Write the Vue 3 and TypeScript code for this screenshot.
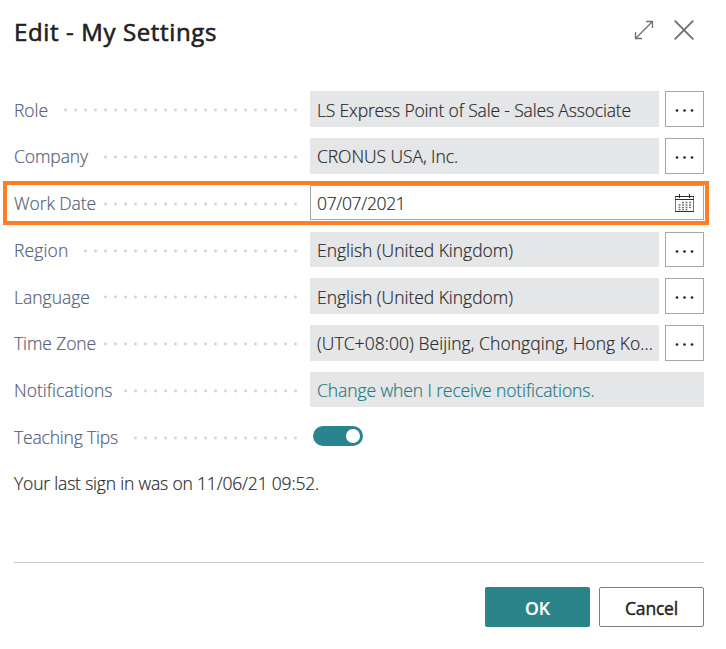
<script setup lang="ts">
import { ref } from 'vue'

interface Row {
  label: string
  labelWidth: number
  dots: number
  value: string
  valueWidth: number
  kind: 'lookup' | 'date' | 'link' | 'toggle'
}

const rows: Row[] = [
  { label: 'Role', labelWidth: 34, dots: 24, value: 'LS Express Point of Sale - Sales Associate', valueWidth: 314, kind: 'lookup' },
  { label: 'Company', labelWidth: 74, dots: 20, value: 'CRONUS USA, Inc.', valueWidth: 141, kind: 'lookup' },
  { label: 'Work Date', labelWidth: 82, dots: 20, value: '07/07/2021', valueWidth: 88.5, kind: 'date' },
  { label: 'Region', labelWidth: 54.5, dots: 22, value: 'English (United Kingdom)', valueWidth: 196, kind: 'lookup' },
  { label: 'Language', labelWidth: 76, dots: 20, value: 'English (United Kingdom)', valueWidth: 196, kind: 'lookup' },
  { label: 'Time Zone', labelWidth: 82, dots: 20, value: '(UTC+08:00) Beijing, Chongqing, Hong Ko...', valueWidth: 336, kind: 'lookup' },
  { label: 'Notifications', labelWidth: 98.5, dots: 18, value: 'Change when I receive notifications.', valueWidth: 277.5, kind: 'link' },
  { label: 'Teaching Tips', labelWidth: 104, dots: 17, value: '', valueWidth: 0, kind: 'toggle' },
]

const teachingTips = ref(true)

// Tracks a run of text so that it fills the given measure.
const vFit = {
  mounted(el: HTMLElement, binding: { value: number }) {
    const count = (el.textContent ?? '').length
    if (!count || !binding.value) return
    const natural = el.getBoundingClientRect().width
    el.style.letterSpacing = `${(binding.value - natural) / count}px`
  },
}
</script>

<template>
  <main class="dialog">
    <header class="head">
      <h1><span v-fit="203">Edit - My Settings</span></h1>
      <div class="tools">
        <svg class="expand" width="20" height="20" viewBox="0 0 20 20">
          <path d="M1.500 18.500 18.500 1.500M12 1.500h6.500v6.500M1.500 12v6.500h6.500" />
        </svg>
        <svg class="close" width="20" height="20" viewBox="0 0 20 20">
          <path d="M.7 .7 19.300 19.300M19.300 .7 .7 19.300" />
        </svg>
      </div>
    </header>

    <section class="fields">
      <div v-for="row in rows" :key="row.label" class="row" :class="row.kind">
        <div class="caption">
          <span v-fit="row.labelWidth" class="label">{{ row.label }}</span>
          <svg class="leader" :width="row.dots * 10" height="4">
            <circle v-for="n in row.dots" :key="n" :cx="n * 10 - 3.500" cy="2" r="1.400" />
          </svg>
        </div>
        <button v-if="row.kind === 'toggle'" class="switch" :class="{ on: teachingTips }" role="switch" @click="teachingTips = !teachingTips">
          <i class="knob"></i>
        </button>
        <template v-else>
          <div class="box"><span v-fit="row.valueWidth" class="value">{{ row.value }}</span>
            <svg v-if="row.kind === 'date'" class="calendar" width="20" height="19" viewBox="0 0 20 19">
              <path class="frame" d="M.5 2.500h18v15H.5z" />
              <path class="edge" d="M0 2.500h19M0 5.500h19M0 17.500h19" />
              <path class="edge" d="M4.500 0v4M14.500 0v4" />
              <path class="days" d="M7 8.500h9M3.500 11h12.500M3.500 13.300h12.500M3.500 15.500h9" />
            </svg>
          </div>
          <button v-if="row.kind === 'lookup'" class="more">
            <svg width="19" height="3"><circle cx="2" cy="1.500" r="1.350" /><circle cx="9.500" cy="1.500" r="1.350" /><circle cx="17" cy="1.500" r="1.350" /></svg>
          </button>
        </template>
      </div>
    </section>

    <p class="note"><span v-fit="305">Your last sign in was on 11/06/21 09:52.</span></p>

    <footer class="actions">
      <button class="ok"><span v-fit="25">OK</span></button>
      <button class="cancel"><span v-fit="53">Cancel</span></button>
    </footer>
  </main>
</template>

<style>
body {
  background: #fff;
}
</style>

<style scoped>
.dialog {
  box-sizing: border-box;
  width: 726px;
  height: 649px;
  padding: 0 22px 0 14px;
  overflow: hidden;
  background: #fff;
  color: #2b2b2b;
  font: 300 17.5px/24px "Open Sans", "Noto Sans", sans-serif;
  -webkit-text-stroke-width: 0.2px;
}
span {
  white-space: pre;
}
button {
  box-sizing: border-box;
  padding: 0;
  border: 0;
  background: none;
  color: inherit;
  font: inherit;
}
.head {
  display: flex;
  justify-content: space-between;
  height: 91px;
}
h1 {
  margin: 16px 0 0;
  color: #212121;
  font-size: 24px;
  font-weight: 400;
  line-height: 32px;
  -webkit-text-stroke-width: 0.6px;
}
.tools {
  display: flex;
  gap: 20px;
  padding: 20px 10px 0 0;
}
.tools path {
  fill: none;
  stroke: #707070;
}
.expand path {
  stroke-width: 1.3;
}
.close path {
  stroke-width: 1.9;
}
.fields {
  display: grid;
  grid-template-rows: 47px 47px 47px 46px 47px 47px 47px 46px;
}
.row {
  display: grid;
  grid-template-columns: 296px 1fr auto;
  align-items: start;
}
.caption {
  display: flex;
  align-items: center;
  justify-content: space-between;
  height: 38px;
  padding-right: 11px;
  color: #56617a;
}
.leader {
  fill: #cfd1d4;
}
.box {
  display: flex;
  box-sizing: border-box;
  align-items: center;
  height: 36px;
  padding: 2px 0 0 7px;
  background: #e5e6e8;
}
.more {
  display: grid;
  place-items: center;
  width: 39px;
  height: 36px;
  margin-left: 6px;
  padding-top: 3px;
  border: 1px solid #a6a6a6;
  fill: #252525;
}
.row:nth-child(4) .box,
.row:nth-child(4) .more {
  height: 35px;
}
.row:not(:nth-child(1)):not(:nth-child(5)) .label,
.row:not(:nth-child(1)):not(:nth-child(5)) .value {
  margin-top: -2px;
}
.date {
  box-sizing: border-box;
  height: 44px;
  margin: -4px -5px 0 -11px;
  padding: 0 1px 0 7px;
  border: 4px solid #ff7f27;
}
.date .box {
  justify-content: space-between;
  height: 35px;
  padding: 2px 8px 0 6px;
  border: 1px solid #a6a6a6;
  background: #fff;
}
.calendar {
  fill: none;
}
.frame {
  stroke: #7a7a7a;
}
.edge {
  stroke: #2b2b2b;
}
.days {
  stroke: #777;
  stroke-width: 1.3;
  stroke-dasharray: 2 1.5;
}
.link .box {
  height: 35px;
  color: #1f7c82;
}
.switch {
  width: 50px;
  height: 20px;
  margin: 7px 0 0 3px;
  padding: 3px;
  border-radius: 10px;
  background: #8a8a8a;
}
.switch.on {
  background: #2a8490;
}
.knob {
  display: block;
  width: 14px;
  height: 14px;
  border-radius: 50%;
  background: #fff;
}
.on .knob {
  margin-left: 30px;
}
.note {
  margin: 6px 0 0;
}
.actions {
  display: flex;
  justify-content: flex-end;
  gap: 9px;
  margin-top: 67px;
  padding-top: 24px;
  border-top: 1px solid #c8c8c8;
}
.actions button {
  width: 105px;
  height: 40px;
  padding-top: 1px;
  border-radius: 2px;
}
.actions .ok {
  background: #2a8488;
  color: #fff;
  font-weight: 600;
}
.actions .cancel {
  border: 1px solid #7f7f7f;
  color: #212121;
  font-weight: 400;
  -webkit-text-stroke-width: 0.4px;
}
</style>
